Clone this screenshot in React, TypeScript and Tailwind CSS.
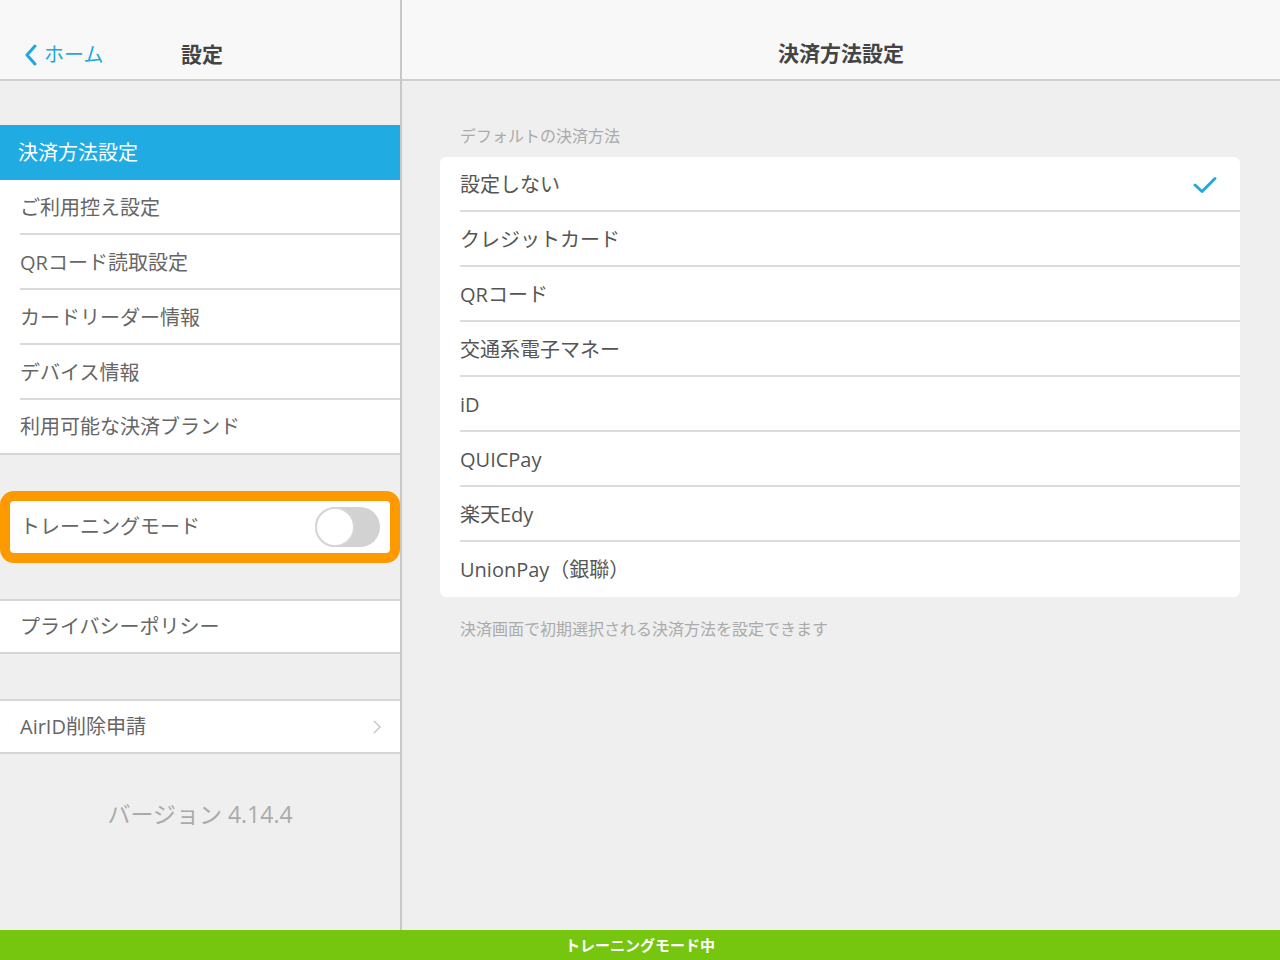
import React from "react";

const font = { fontFamily: '"Open Sans", "Noto Sans CJK JP", "Noto Sans", sans-serif' };

function LeftRow({ label, sep, chevron, boxed }: { label: string; sep?: boolean; chevron?: boolean; boxed?: "bottom" | "both" }) {
  const border = boxed === "both" ? "border-y-2 border-[#d6d6d6]" : boxed === "bottom" ? "border-b-2 border-[#d6d6d6]" : "";
  return (
    <div className={`relative h-[55px] bg-white flex items-center pl-5 pr-[18px] ${border}`}>
      <span className="text-[20px] text-[#666] leading-none">{label}</span>
      {chevron && (
        <svg className="ml-auto" width="10" height="16" viewBox="0 0 10 16">
          <path d="M2 2 L8 8 L2 14" fill="none" stroke="#c4c4c4" strokeWidth="1.4" />
        </svg>
      )}
      {sep && <div className="absolute bottom-0 left-5 right-0 h-[2px] bg-[#dadada]" />}
    </div>
  );
}

function RightRow({ label, checked, last }: { label: string; checked?: boolean; last?: boolean }) {
  return (
    <div className="relative h-[55px] flex items-center pl-5 pr-[22px]">
      <span className="text-[20px] text-[#555] leading-none">{label}</span>
      {checked && (
        <svg className="ml-auto" width="26" height="20" viewBox="0 0 26 20">
          <path d="M3 10 L10 16.5 L23 3.5" fill="none" stroke="#22a9e1" strokeWidth="3" strokeLinecap="round" strokeLinejoin="round" />
        </svg>
      )}
      {!last && <div className="absolute bottom-0 left-5 right-0 h-[2px] bg-[#dcdcdc]" />}
    </div>
  );
}

export default function App() {
  const methods = ["設定しない", "クレジットカード", "QRコード", "交通系電子マネー", "iD", "QUICPay", "楽天Edy", "UnionPay（銀聯）"];
  return (
    <div className="w-[1280px] h-[960px] flex flex-col bg-[#efefef] overflow-hidden" style={font}>
      <div className="flex flex-1 min-h-0">
        {/* Left panel */}
        <div className="w-[402px] shrink-0 flex flex-col border-r-2 border-[#c8c8c8] bg-[#efefef]">
          <div className="h-[81px] bg-[#f8f8f8] border-b-2 border-[#cfcfcf] relative">
            <div className="absolute left-[24px] top-[44px] flex items-center text-[#1fa8e0]">
              <svg width="14" height="22" viewBox="0 0 14 22">
                <path d="M11 2 L3 11 L11 20" fill="none" stroke="#1fa8e0" strokeWidth="3" strokeLinecap="round" strokeLinejoin="round" />
              </svg>
              <span className="ml-[6px] text-[20px] leading-none">ホーム</span>
            </div>
            <span className="absolute left-[181px] top-[44px] text-[21px] font-bold text-[#444] leading-none">設定</span>
          </div>
          <div className="h-[44px]" />
          <div className="h-[55px] bg-[#20abe3] flex items-center pl-[18px]">
            <span className="text-[20px] text-white leading-none">決済方法設定</span>
          </div>
          <LeftRow label="ご利用控え設定" sep />
          <LeftRow label="QRコード読取設定" sep />
          <LeftRow label="カードリーダー情報" sep />
          <LeftRow label="デバイス情報" sep />
          <LeftRow label="利用可能な決済ブランド" boxed="bottom" />
          <div className="h-[36px]" />
          <div className="h-[72px] border-[10px] border-[#ff9900] rounded-[14px] bg-white flex items-center pl-[10px] pr-[10px]">
            <span className="text-[20px] text-[#666] leading-none">トレーニングモード</span>
            <div className="ml-auto w-[65px] h-[40px] rounded-full bg-[#d2d2d2] relative">
              <div className="absolute left-0 top-0 w-[40px] h-[40px] rounded-full bg-white border-2 border-[#d6d6d6]" />
            </div>
          </div>
          <div className="h-[36px]" />
          <LeftRow label="プライバシーポリシー" boxed="both" />
          <div className="h-[45px]" />
          <LeftRow label="AirID削除申請" boxed="both" chevron />
          <div className="flex justify-center pt-[49px]">
            <span className="text-[23px] text-[#aaaaaa] leading-none">バージョン 4.14.4</span>
          </div>
        </div>
        {/* Right panel */}
        <div className="flex-1 flex flex-col">
          <div className="h-[81px] bg-[#f8f8f8] border-b-2 border-[#cfcfcf] flex items-center justify-center pt-[28px]">
            <span className="text-[21px] font-bold text-[#444] leading-none">決済方法設定</span>
          </div>
          <div className="pl-[38px] pr-[40px] pt-[47px]">
            <div className="pl-5 text-[16px] text-[#aaa] leading-none mb-[13px]">デフォルトの決済方法</div>
            <div className="bg-white rounded-[6px] overflow-hidden">
              {methods.map((m, i) => (
                <RightRow key={m} label={m} checked={i === 0} last={i === methods.length - 1} />
              ))}
            </div>
            <div className="pl-5 pt-[24px] text-[16px] text-[#aaa] leading-none">決済画面で初期選択される決済方法を設定できます</div>
          </div>
        </div>
      </div>
      <div className="h-[30px] bg-[#76c50f] flex items-center justify-center">
        <span className="text-[15px] font-bold text-white leading-none">トレーニングモード中</span>
      </div>
    </div>
  );
}
